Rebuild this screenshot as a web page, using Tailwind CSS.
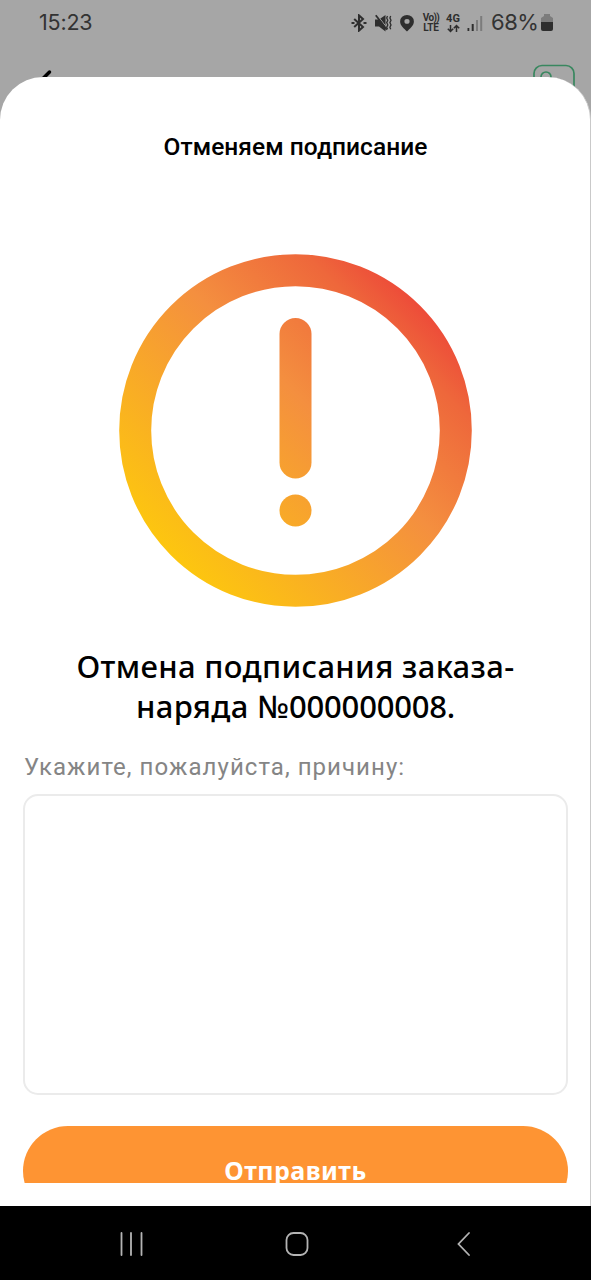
<!DOCTYPE html>
<html lang="ru">
<head>
<meta charset="utf-8">
<title>Отменяем подписание</title>
<script src="https://cdn.jsdelivr.net/npm/@tailwindcss/browser@4"></script>
</head>
<body class="relative flex h-[1280px] w-[591px] flex-col overflow-hidden bg-[#a6a6a6] font-['Roboto',sans-serif]">
  <!-- status bar -->
  <header class="flex h-[46px] shrink-0 items-center pl-[39px] pr-[38px] text-[#333]">
    <span class="pb-[2px] font-['Inter',sans-serif] text-[21.5px] leading-[44px] tracking-[-0.2px]">15:23</span>
    <div class="ml-auto flex items-center">
      <svg class="mr-[8px] h-[18px] w-[16px]" viewBox="0 0 16 18" fill="none" stroke="#2e2e2e" stroke-width="2"><path d="M3.2 5 12 13 8 16.6V1.4L12 5 3.2 13"/><path d="M0.5 9h3M12.5 9h3" /></svg>
      <svg class="mr-[8px] h-[18px] w-[17px]" viewBox="0 0 17 18"><path d="M0 5.500h4l6.500-4.500v16.500l-6.500-5H0z" fill="#2e2e2e"/><path d="M1.300 0l12 15.500" stroke="#a6a6a6" stroke-width="1"/><path d="M.8 1.200l11 14.500" stroke="#2e2e2e" stroke-width="1.800"/><path d="M12.500 2l-.8 2 1.100 2.300-1.100 2.300 1.100 2.300-1.100 2.300.8 2M15.700 2l-.8 2 1.100 2.300-1.100 2.300 1.100 2.300-1.100 2.300.8 2" fill="none" stroke="#2e2e2e" stroke-width="1.300"/></svg>
      <svg class="mr-[8px] h-[18px] w-[14px]" viewBox="0 0 13 18" preserveAspectRatio="none"><path d="M6.500 1A6.400 6.400 0 0 0 .1 7.400C.1 11.500 4 14.500 6.500 17.500 9 14.500 12.900 11.500 12.900 7.400A6.400 6.400 0 0 0 6.500 1zm0 4a2.400 2.400 0 1 1 0 4.800 2.400 2.400 0 0 1 0-4.800z" fill="#2e2e2e" fill-rule="evenodd"/></svg>
      <div class="mr-[6px] flex w-[18px] flex-col items-center whitespace-nowrap text-[10px] font-bold leading-[10px] text-[#2e2e2e]"><span class="tracking-[-0.6px]">Vo))</span><span class="tracking-[-0.2px]">LTE</span></div>
      <div class="mr-[7px] flex w-[14px] flex-col items-center text-[11px] font-bold leading-[10px] text-[#2e2e2e]"><span>4G</span>
        <svg class="h-[9px] w-[13px]" viewBox="0 0 13 9" fill="none" stroke="#2e2e2e" stroke-width="1.500"><path d="M3.500 1v6.500M.8 4.800l2.700 2.700 2.700-2.700M9.500 8V1.500M6.800 4.200l2.700-2.700 2.700 2.700"/></svg></div>
      <svg class="mr-[8px] h-[18px] w-[16px]" viewBox="0 0 16 18"><path d="M.5 14h1.800v3H.5zM4.700 10h2v7h-2z" fill="#2e2e2e"/><path d="M9 6h2v11H9zM13.200 2h2v15h-2z" fill="#7c7c7c"/></svg>
      <span class="mr-[3px] w-[47px] whitespace-nowrap pb-[2px] font-['Inter',sans-serif] text-[22px] leading-[44px] tracking-[-0.5px]">68%</span>
      <svg class="h-[18px] w-[12px]" viewBox="0 0 12 18"><path d="M3 0h6v2l3 2v4H0V4l3-2z" fill="#7c7c7c"/><path d="M0 8h12v7a2 2 0 0 1-2 2H2a2 2 0 0 1-2-2z" fill="#2e2e2e"/></svg>
    </div>
  </header>
  <!-- dimmed app bar behind the sheet -->
  <div class="flex h-[31px] shrink-0 items-start justify-between overflow-visible pl-[38px] pr-[16px] pt-[18px]">
    <svg class="mt-[4px] h-[22px] w-[16px]" viewBox="0 0 16 22" fill="none" stroke="#000" stroke-width="3.5" stroke-linecap="round"><path d="M11.500 4 4 11.500 11.500 19"/></svg>
    <svg class="h-[42px] w-[42px]" viewBox="0 0 42 42" fill="none" stroke="#39875f" stroke-width="1.700"><rect x="1" y="1.500" width="40" height="38" rx="8"/><circle cx="13" cy="13" r="5"/></svg>
  </div>
  <!-- bottom sheet -->
  <main class="z-10 flex h-[1129px] shrink-0 flex-col overflow-hidden rounded-t-[43px] border-r border-[#c9c9c9] bg-white pl-[23px] pr-[22px]">
    <h1 class="mt-[54px] text-center text-[24.500px] font-medium leading-[32px] tracking-[0.05px] text-black">Отменяем подписание</h1>
    <svg class="mx-auto mt-[90px] h-[355px] w-[355px] shrink-0" viewBox="0 0 355 355">
      <defs><linearGradient id="warm" gradientUnits="userSpaceOnUse" x1="53" y1="302" x2="304" y2="51"><stop offset="0" stop-color="#fdc60f"/><stop offset=".57" stop-color="#f48f3f"/><stop offset=".87" stop-color="#ee673b"/><stop offset="1" stop-color="#ed4a39"/></linearGradient></defs>
      <circle cx="177.500" cy="177.500" r="160.300" fill="none" stroke="url(#warm)" stroke-width="32"/>
      <rect x="161.500" y="65" width="32" height="160.500" rx="16" fill="url(#warm)"/>
      <circle cx="177.500" cy="257.500" r="16" fill="url(#warm)"/>
    </svg>
    <h2 class="mt-[38px] text-center font-['Noto_Sans',sans-serif] text-[31px] font-medium leading-[40px] tracking-[0.33px] text-black">Отмена подписания заказа-<br>наряда №<span class="tracking-[-0.2px]">000000008.</span></h2>
    <label for="reason" class="mt-[26px] block pl-px text-[24px] leading-[30px] tracking-[1.05px] text-[#858585]">Укажите, пожалуйста, причину:</label>
    <textarea id="reason" class="mt-[12px] block h-[301px] w-full shrink-0 resize-none rounded-[15px] border-2 border-[#ebebeb] bg-white"></textarea>
    <div class="mt-[31px] h-[57px] shrink-0 overflow-hidden">
      <button class="block h-[90px] w-full rounded-[45px] bg-[#fe9433] pb-[2px] text-center font-['Noto_Sans',sans-serif] text-[25px] font-bold leading-[88px] tracking-[0.45px] text-white">Отправить</button>
    </div>
  </main>
  <!-- system navigation -->
  <nav class="z-10 flex h-[74px] shrink-0 items-start bg-black pl-[118px] pt-[25px]">
    <svg class="h-[26px] w-[26px]" viewBox="0 0 26 26" stroke="#b4b4b4" stroke-width="1.800" stroke-linecap="round"><path d="M3.500 2v22M13 2v22M23.500 2v22"/></svg>
    <svg class="ml-[140px] h-[26px] w-[26px]" viewBox="0 0 26 26" fill="none" stroke="#b4b4b4" stroke-width="1.800"><rect x="2.500" y="2" width="21" height="22" rx="7"/></svg>
    <svg class="ml-[142px] h-[26px] w-[22px]" viewBox="0 0 22 26" fill="none" stroke="#b4b4b4" stroke-width="1.800" stroke-linecap="round"><path d="M17 2 6.500 13 17 24"/></svg>
  </nav>
</body>
</html>
